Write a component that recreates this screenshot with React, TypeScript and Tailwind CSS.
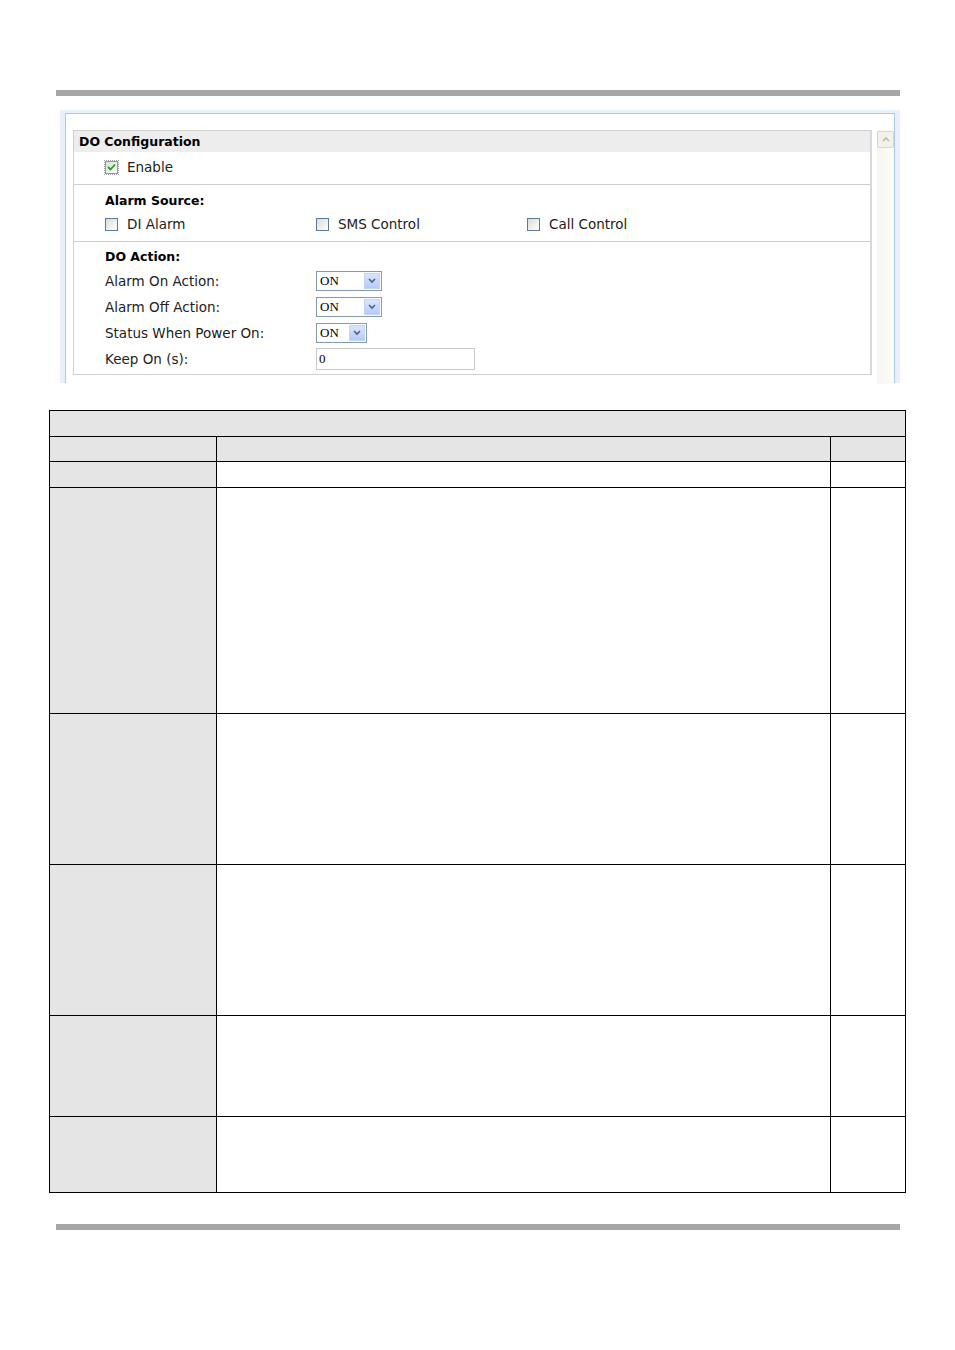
import React from 'react';

const font = { fontFamily: '"DejaVu Sans", Verdana, sans-serif' };

const Checkbox = ({ checked }: { checked?: boolean }) => (
  <span
    className={`inline-flex w-[13px] h-[13px] items-center justify-center border ${
      checked ? 'border-[#8b9cb3] outline-1 outline-dotted outline-[#9aa0a6]' : 'border-[#5c7a9c]'
    } bg-gradient-to-br from-[#dcdcd7] to-white`}
  >
    {checked && (
      <svg width="9" height="8" viewBox="0 0 9 8">
        <path d="M1 4 L3.5 6.5 L8 1.5" stroke="#21a121" strokeWidth="1.8" fill="none" />
      </svg>
    )}
  </span>
);

const Select = ({ width }: { width: string }) => (
  <div className={`flex items-center justify-between h-[20px] ${width} border border-[#7f9db9] bg-white pl-[3px] pr-[1px]`}>
    <span className="text-[13px] text-black" style={{ fontFamily: '"Liberation Serif", serif' }}>ON</span>
    <span className="flex items-center justify-center w-[16px] h-[16px] bg-gradient-to-b from-[#dbe6fd] to-[#b6cafa] border border-[#c4d4f7]">
      <svg width="8" height="6" viewBox="0 0 8 6">
        <path d="M1 1 L4 4 L7 1" stroke="#4d6185" strokeWidth="1.6" fill="none" />
      </svg>
    </span>
  </div>
);

const Row = ({ label, children }: { label: string; children: React.ReactNode }) => (
  <div className="flex items-center h-[26px]">
    <div className="w-[211px] text-[13.5px] text-[#222]">{label}</div>
    {children}
  </div>
);

const rows = [26, 25, 26, 226, 151, 151, 101, 76];

export default function App() {
  return (
    <div className="w-[955px] h-[1350px] bg-white pt-[90px]" style={font}>
      <div className="ml-[56px] w-[844px] h-[6px] bg-[#a6a6a6]" />

      <div className="mt-[14px] ml-[60px] w-[840px] h-[273px] bg-[#e8f1fb] pl-[5px] pt-[3px]">
        <div className="w-[830px] h-[270px] bg-white border-l border-t border-r border-[#a9c8ea] pl-[7px] pt-[16px] flex gap-[5px]">
          <div className="w-[799px] h-[245px] border border-[#d0d0d0] border-r-[2px] border-r-[#d8d8d8] flex flex-col">
            <div className="h-[21px] bg-[#ededed] pl-[5px] pt-[1px] flex items-center text-[12.5px] font-bold text-black">DO Configuration</div>
            <div className="pt-[5px] pb-[7px] pl-[31px] border-b border-[#cfcfcf]">
              <div className="flex items-center h-[20px] gap-[9px]">
                <Checkbox checked />
                <span className="text-[13.5px] text-[#222]">Enable</span>
              </div>
            </div>
            <div className="pt-[6px] pb-[4px] pl-[31px] border-b border-[#cfcfcf]">
              <div className="h-[20px] flex items-center text-[12.5px] font-bold text-black">Alarm Source:</div>
              <div className="flex items-center h-[26px]">
                {['DI Alarm', 'SMS Control', 'Call Control'].map((t) => (
                  <div key={t} className="w-[211px] flex items-center gap-[9px]">
                    <Checkbox />
                    <span className="text-[13.5px] text-[#222]">{t}</span>
                  </div>
                ))}
              </div>
            </div>
            <div className="pt-[5px] pl-[31px]">
              <div className="h-[21px] flex items-center text-[12.5px] font-bold text-black">DO Action:</div>
              <Row label="Alarm On Action:"><Select width="w-[66px]" /></Row>
              <Row label="Alarm Off Action:"><Select width="w-[66px]" /></Row>
              <Row label="Status When Power On:"><Select width="w-[51px]" /></Row>
              <Row label="Keep On (s):">
                <div className="w-[159px] h-[22px] border border-[#c8c8c8] pl-[2px] flex items-center text-[13px]" style={{ fontFamily: '"Liberation Serif", serif' }}>0</div>
              </Row>
            </div>
          </div>
          <div className="w-[17px] h-[254px] bg-gradient-to-r from-[#f6f5ee] to-[#fdfdfb] flex flex-col">
            <div className="h-[17px] mt-[1px] rounded-[2px] border border-[#d7d6cc] bg-[#f3f2ea] flex items-center justify-center">
              <svg width="8" height="5" viewBox="0 0 8 5">
                <path d="M1 4 L4 1 L7 4" stroke="#b9b8ad" strokeWidth="1.5" fill="none" />
              </svg>
            </div>
          </div>
        </div>
      </div>

      <div className="mt-[27px] ml-[49px] w-[857px] grid grid-cols-[167px_614px_75px] border-r border-b border-black">
        <div className="col-span-3 h-[26px] bg-[#e5e5e5] border-l border-t border-black" />
        {rows.slice(1).map((h, i) => (
          <React.Fragment key={i}>
            <div className="bg-[#e5e5e5] border-l border-t border-black" style={{ height: h }} />
            <div className={`${i === 0 ? 'bg-[#e5e5e5]' : 'bg-white'} border-l border-t border-black`} />
            <div className={`${i === 0 ? 'bg-[#e5e5e5]' : 'bg-white'} border-l border-t border-black`} />
          </React.Fragment>
        ))}
      </div>

      <div className="mt-[31px] ml-[56px] w-[844px] h-[6px] bg-[#a6a6a6]" />
    </div>
  );
}
